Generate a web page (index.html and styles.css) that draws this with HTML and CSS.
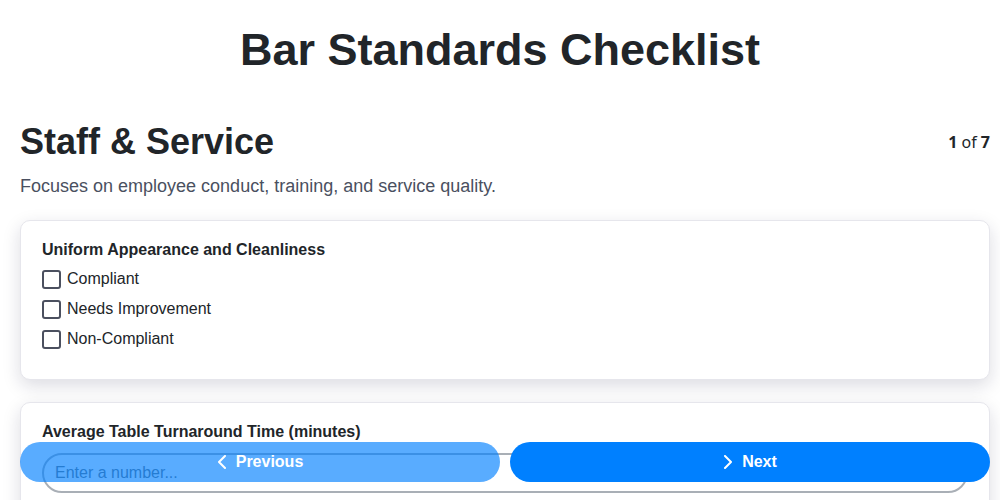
FILE: index.html
```html
<!DOCTYPE html>
<html lang="en">
<head>
<meta charset="utf-8">
<title>Bar Standards Checklist</title>
<link rel="stylesheet" href="styles.css">
</head>
<body>
<header class="header">
  <h1 class="title">Bar Standards Checklist</h1>
</header>
<main class="page">
  <section class="section">
    <div class="section-head">
      <h2 class="section-title">Staff &amp; Service</h2>
      <div class="page-count"><b>1</b> of <b>7</b></div>
    </div>
    <p class="section-desc">Focuses on employee conduct, training, and service quality.</p>

    <div class="card">
      <div class="field-label">Uniform Appearance and Cleanliness</div>
      <div class="options">
        <label class="option"><span class="box"></span><span>Compliant</span></label>
        <label class="option"><span class="box"></span><span>Needs Improvement</span></label>
        <label class="option"><span class="box"></span><span>Non-Compliant</span></label>
      </div>
    </div>

    <div class="card">
      <div class="field-label">Average Table Turnaround Time (minutes)</div>
      <input class="num-input" type="text" placeholder="Enter a number...">
      <div class="card-spacer"></div>
    </div>
  </section>
</main>

<nav class="nav">
  <button class="nav-btn prev" type="button">
    <svg width="10" height="14" viewBox="0 0 10 14"><polyline points="8,1 2,7 8,13" fill="none" stroke="#fff" stroke-width="2" stroke-linecap="round" stroke-linejoin="round"/></svg>
    <span>Previous</span>
  </button>
  <button class="nav-btn next" type="button">
    <svg width="10" height="14" viewBox="0 0 10 14"><polyline points="2,1 8,7 2,13" fill="none" stroke="#fff" stroke-width="2" stroke-linecap="round" stroke-linejoin="round"/></svg>
    <span>Next</span>
  </button>
</nav>
</body>
</html>
```

FILE: styles.css
```css
* { box-sizing: border-box; }

html {
  overflow: hidden;
}

html, body {
  margin: 0;
  padding: 0;
  background: #fff;
}

body {
  font-family: "Liberation Sans", Arial, sans-serif;
  color: #212529;
}

.header {
  padding: 24px 20px 0;
}

.page {
  padding: 0 10px 0 20px;
}

.title {
  margin: 0;
  font-size: 45px;
  line-height: 52px;
  font-weight: 700;
  text-align: center;
  color: #212529;
}

.section {
  margin-top: 45px;
}

.section-head {
  display: flex;
  justify-content: space-between;
  align-items: center;
}

.section-title {
  margin: 0;
  font-size: 36px;
  line-height: 41px;
  font-weight: 700;
  color: #212529;
}

.page-count {
  font-family: "Noto Sans", "Open Sans", sans-serif;
  font-size: 16px;
  color: #212529;
}

.page-count b {
  font-weight: 700;
}

.section-desc {
  margin: 14px 0 23px;
  font-size: 18px;
  line-height: 21px;
  color: #4a5060;
}

.card {
  background: #fff;
  border: 1px solid #e6e6ec;
  border-radius: 10px;
  box-shadow: 0 6px 18px rgba(20, 20, 60, 0.15);
  padding: 19px 21px 20px;
  margin-bottom: 22px;
}

.field-label {
  font-size: 16px;
  line-height: 19px;
  font-weight: 700;
  color: #212529;
}

.options {
  display: flex;
  flex-direction: column;
  margin-top: 5px;
  margin-bottom: 5px;
}

.option {
  display: flex;
  align-items: center;
  gap: 6px;
  height: 30px;
  font-size: 16px;
  color: #212529;
}

.box {
  width: 19px;
  height: 19px;
  border: 2px solid #4b505f;
  border-radius: 3px;
  background: #fff;
}

.num-input {
  display: block;
  width: 100%;
  height: 40px;
  margin-top: 12px;
  padding: 0 11px;
  border: 2px solid #a9afb6;
  border-radius: 20px;
  font-family: "Liberation Sans", Arial, sans-serif;
  font-size: 16px;
  color: #212529;
  background: #fff;
  outline: none;
}

.num-input::placeholder {
  color: #6c757d;
}

.card-spacer {
  height: 40px;
}

.nav {
  position: fixed;
  left: 20px;
  right: 10px;
  bottom: 18px;
  display: grid;
  grid-template-columns: 1fr 1fr;
  gap: 10px;
}

.nav-btn {
  display: flex;
  align-items: center;
  justify-content: center;
  gap: 9px;
  height: 40px;
  border: none;
  border-radius: 20px;
  background: #0080ff;
  color: #fff;
  font-family: "Liberation Sans", Arial, sans-serif;
  font-size: 16px;
  font-weight: 700;
}

.nav-btn.prev {
  opacity: 0.65;
}
```
